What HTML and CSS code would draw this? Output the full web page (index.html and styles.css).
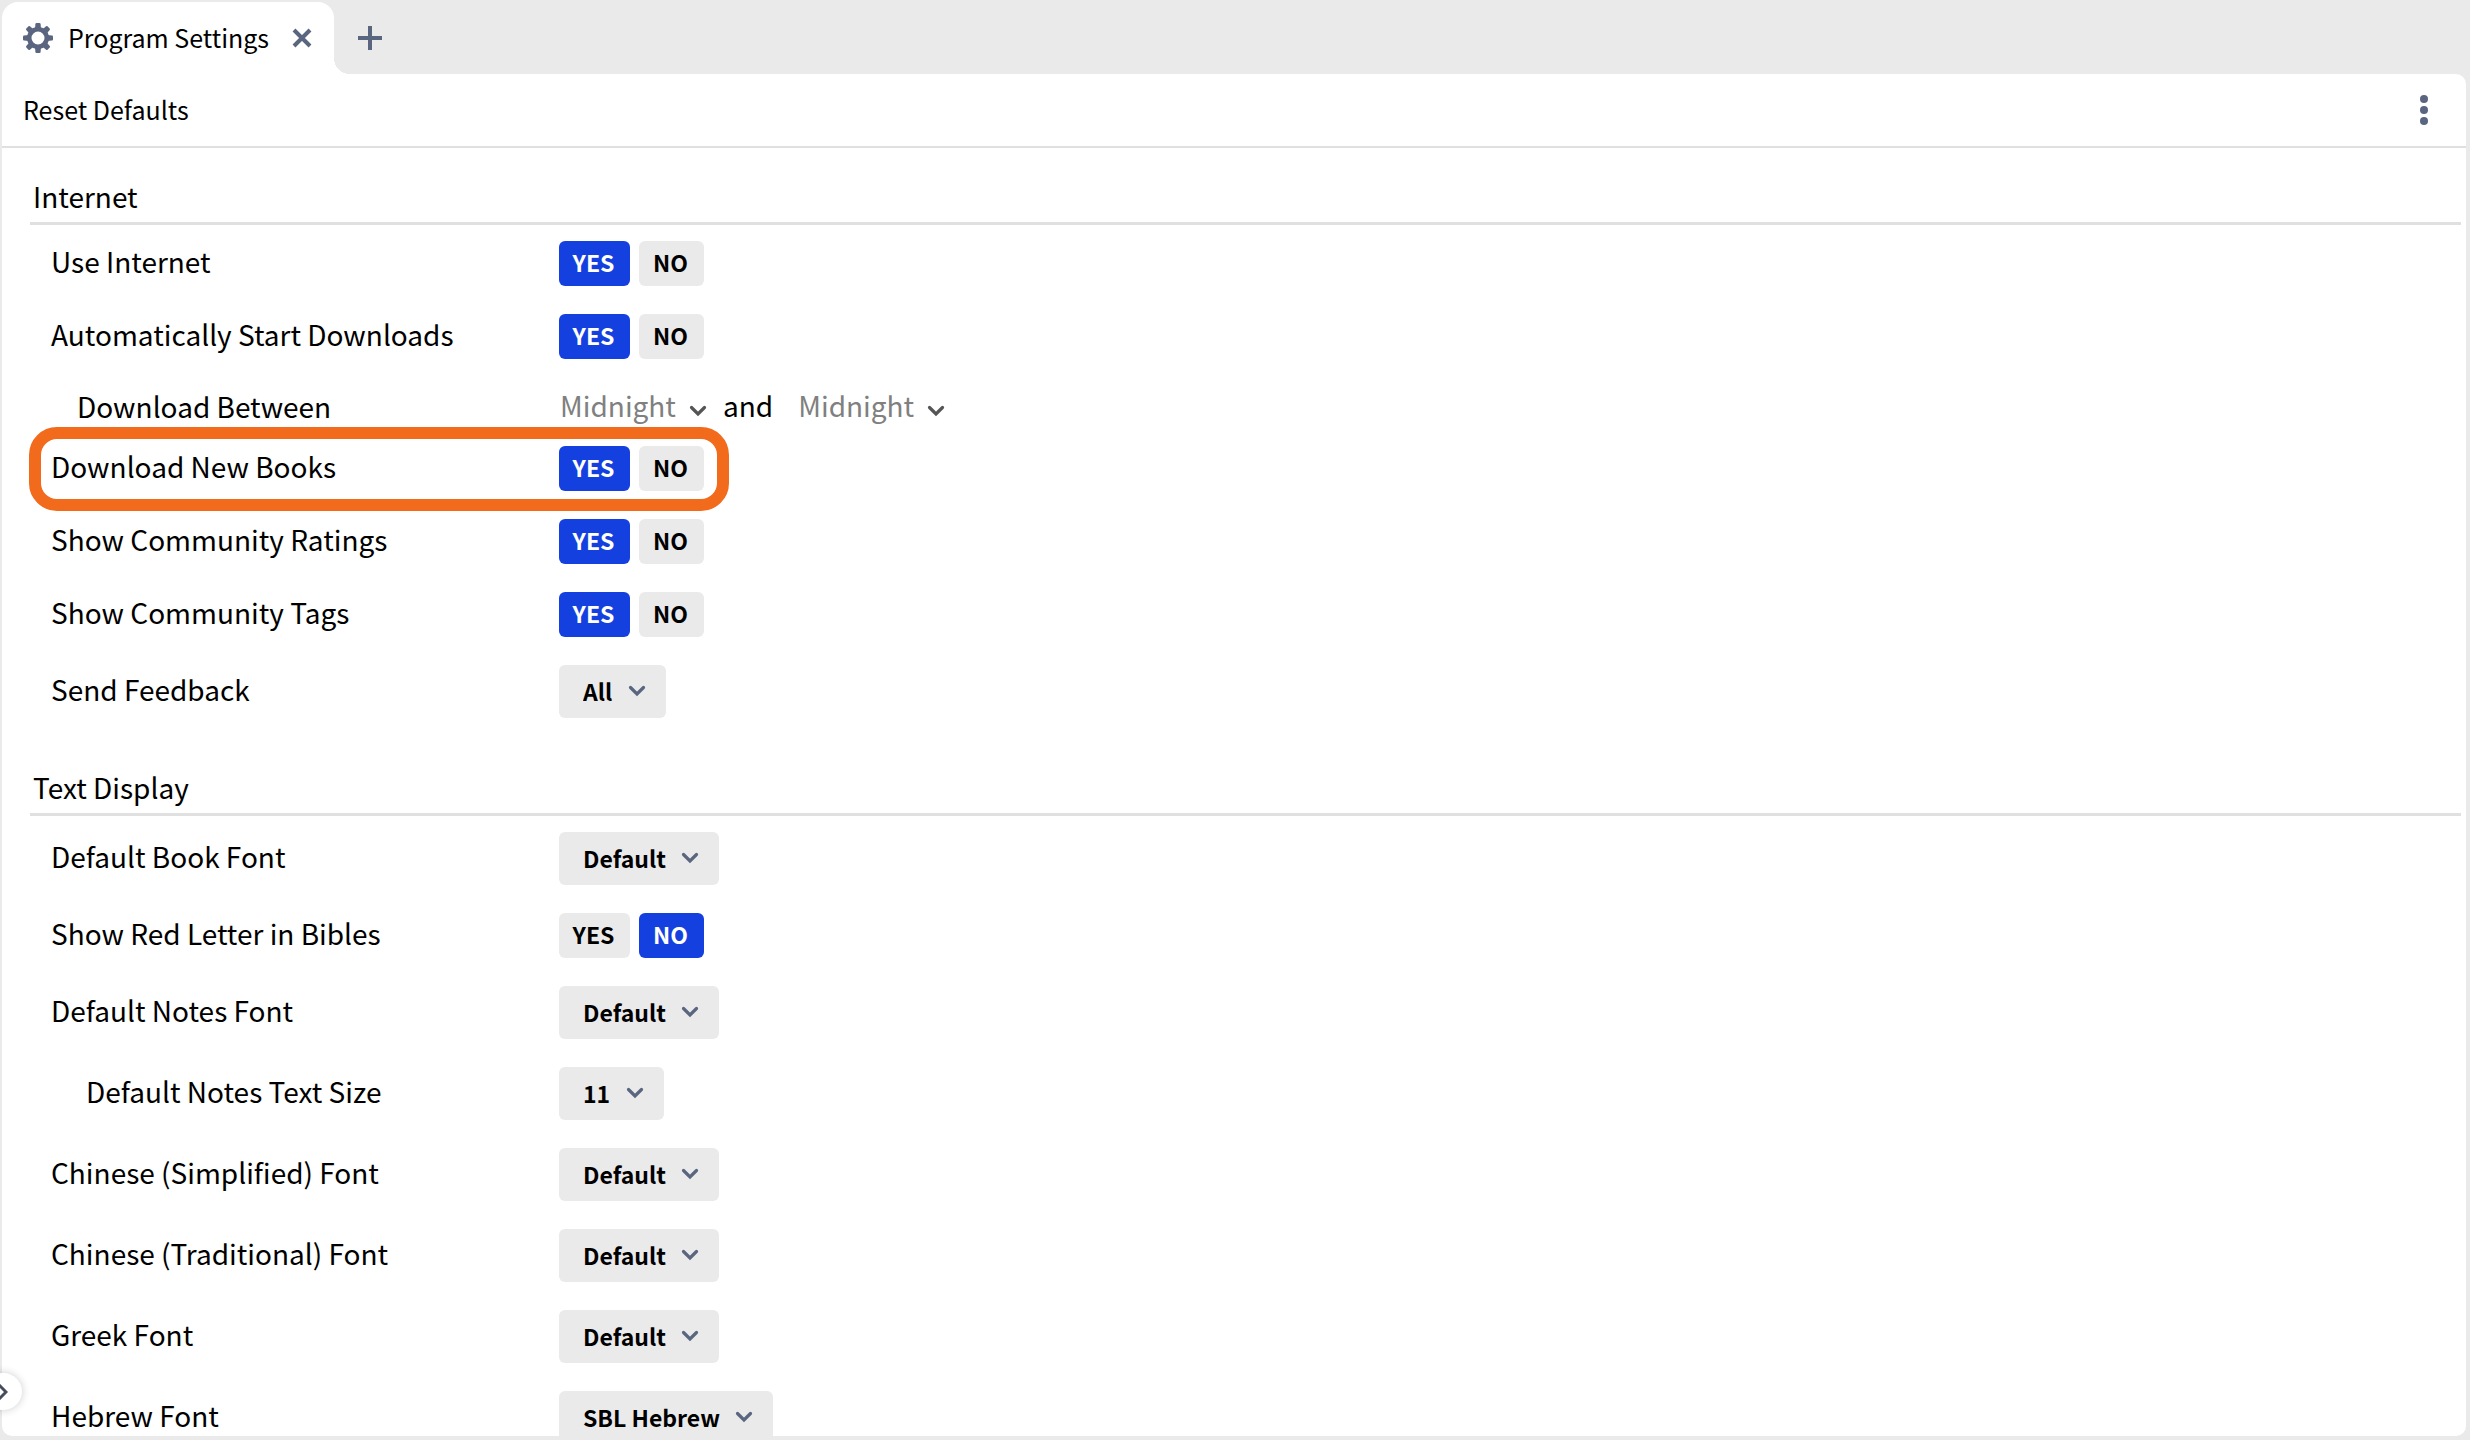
FILE: index.html
```html
<!DOCTYPE html>
<html lang="en">
<head>
<meta charset="utf-8">
<title>Program Settings</title>
<link rel="stylesheet" href="styles.css">
</head>
<body>
<svg class="defs" aria-hidden="true">
  <symbol id="chevron" viewBox="0 0 18 12"><path d="M2.5 2.5 9 9l6.500-6.500" fill="none" stroke="currentColor" stroke-width="3.200" stroke-linecap="round"/></symbol>
</svg>
<div class="app">
  <header class="tabs">
    <div class="tab">
      <svg class="gear" viewBox="0 0 30 30" aria-hidden="true">
        <g fill="currentColor">
          <path fill-rule="evenodd" d="M15 4a11 11 0 1 0 0 22a11 11 0 1 0 0-22zm0 4.500a6.500 6.500 0 1 1 0 13a6.500 6.500 0 1 1 0-13z"/>
          <path id="tooth" d="M12 6 12.400 1Q12.500 0 13.500 0h3Q17.500 0 17.600 1L18 6z"/>
          <use href="#tooth" transform="rotate(45 15 15)"/>
          <use href="#tooth" transform="rotate(90 15 15)"/>
          <use href="#tooth" transform="rotate(135 15 15)"/>
          <use href="#tooth" transform="rotate(180 15 15)"/>
          <use href="#tooth" transform="rotate(225 15 15)"/>
          <use href="#tooth" transform="rotate(270 15 15)"/>
          <use href="#tooth" transform="rotate(315 15 15)"/>
        </g>
      </svg>
      <span class="tab-title">Program Settings</span>
      <button class="icon-button" type="button" aria-label="Close tab">
        <svg class="close" viewBox="0 0 20 20"><path d="m2 2 16 16M18 2 2 18" stroke="currentColor" stroke-width="4"/></svg>
      </button>
    </div>
    <button class="icon-button add" type="button" aria-label="New tab">
      <svg class="plus" viewBox="0 0 24 24"><path d="M12 0v24M0 12h24" stroke="currentColor" stroke-width="4"/></svg>
    </button>
  </header>

  <main class="panel">
    <div class="toolbar">
      <button class="reset" type="button">Reset Defaults</button>
      <button class="icon-button" type="button" aria-label="More">
        <svg class="dots" viewBox="0 0 8 30"><g fill="currentColor"><circle cx="4" cy="4" r="4"/><circle cx="4" cy="15" r="4"/><circle cx="4" cy="26" r="4"/></g></svg>
      </button>
    </div>

    <div class="content">
      <section class="section">
        <h2 class="heading">Internet</h2>
        <div class="rows">
          <div class="row" role="group" aria-labelledby="l1">
            <span class="label" id="l1">Use Internet</span>
            <div class="toggle"><button class="choice on" type="button" aria-pressed="true">YES</button><button class="choice no" type="button" aria-pressed="false">NO</button></div>
          </div>
          <div class="row" role="group" aria-labelledby="l2">
            <span class="label" id="l2">Automatically Start Downloads</span>
            <div class="toggle"><button class="choice on" type="button" aria-pressed="true">YES</button><button class="choice no" type="button" aria-pressed="false">NO</button></div>
          </div>
          <div class="row">
            <label class="label between" for="from">Download Between</label>
            <div class="times">
              <span class="time"><select id="from" disabled><option>Midnight</option></select><svg class="chevron"><use href="#chevron"/></svg></span>
              <label class="and" for="to">and</label>
              <span class="time"><select id="to" disabled><option>Midnight</option></select><svg class="chevron"><use href="#chevron"/></svg></span>
            </div>
          </div>
          <div class="row highlighted" role="group" aria-labelledby="l3">
            <span class="label" id="l3">Download New Books</span>
            <div class="toggle"><button class="choice on" type="button" aria-pressed="true">YES</button><button class="choice no" type="button" aria-pressed="false">NO</button></div>
          </div>
          <div class="row" role="group" aria-labelledby="l4">
            <span class="label" id="l4">Show Community Ratings</span>
            <div class="toggle"><button class="choice on" type="button" aria-pressed="true">YES</button><button class="choice no" type="button" aria-pressed="false">NO</button></div>
          </div>
          <div class="row" role="group" aria-labelledby="l5">
            <span class="label" id="l5">Show Community Tags</span>
            <div class="toggle"><button class="choice on" type="button" aria-pressed="true">YES</button><button class="choice no" type="button" aria-pressed="false">NO</button></div>
          </div>
          <div class="row">
            <label class="label" for="feedback">Send Feedback</label>
            <span class="dropdown"><select id="feedback"><option>All</option></select><svg class="chevron"><use href="#chevron"/></svg></span>
          </div>
        </div>
      </section>

      <section class="section">
        <h2 class="heading">Text Display</h2>
        <div class="rows">
          <div class="row">
            <label class="label" for="book">Default Book Font</label>
            <span class="dropdown"><select id="book"><option>Default</option></select><svg class="chevron"><use href="#chevron"/></svg></span>
          </div>
          <div class="row" role="group" aria-labelledby="l6">
            <span class="label" id="l6">Show Red Letter in Bibles</span>
            <div class="toggle"><button class="choice" type="button" aria-pressed="false">YES</button><button class="choice no on" type="button" aria-pressed="true">NO</button></div>
          </div>
          <div class="row">
            <label class="label" for="notes">Default Notes Font</label>
            <span class="dropdown"><select id="notes"><option>Default</option></select><svg class="chevron"><use href="#chevron"/></svg></span>
          </div>
          <div class="row">
            <label class="label nested" for="size">Default Notes Text Size</label>
            <span class="dropdown"><select id="size"><option>11</option></select><svg class="chevron"><use href="#chevron"/></svg></span>
          </div>
          <div class="row">
            <label class="label" for="simplified">Chinese (Simplified) Font</label>
            <span class="dropdown"><select id="simplified"><option>Default</option></select><svg class="chevron"><use href="#chevron"/></svg></span>
          </div>
          <div class="row">
            <label class="label" for="traditional">Chinese (Traditional) Font</label>
            <span class="dropdown"><select id="traditional"><option>Default</option></select><svg class="chevron"><use href="#chevron"/></svg></span>
          </div>
          <div class="row">
            <label class="label" for="greek">Greek Font</label>
            <span class="dropdown"><select id="greek"><option>Default</option></select><svg class="chevron"><use href="#chevron"/></svg></span>
          </div>
          <div class="row">
            <label class="label" for="hebrew">Hebrew Font</label>
            <span class="dropdown"><select id="hebrew"><option>SBL Hebrew</option></select><svg class="chevron"><use href="#chevron"/></svg></span>
          </div>
        </div>
      </section>
    </div>
  </main>
  <button class="expand" type="button" aria-label="Expand sidebar">
    <svg class="expand-icon" viewBox="0 0 10 16"><path d="m1 1 7 7-7 7" fill="none" stroke="currentColor" stroke-width="3"/></svg>
  </button>
</div>
</body>
</html>
```
FILE: styles.css
```css
*,
*::before,
*::after {
  box-sizing: border-box;
}

body {
  margin: 0;
  background: #eaeaea;
  color: #000;
  font-family: "Noto Sans CJK SC", "Noto Sans", sans-serif;
  font-size: 28px;
  line-height: 40px;
}

button,
select {
  margin: 0;
  padding: 0;
  border: 0;
  background: none;
  color: inherit;
  font: inherit;
}

select {
  appearance: none;
  opacity: 1;
}

svg {
  display: block;
  flex: none;
}

.defs {
  display: none;
}

.app {
  position: relative;
  display: flex;
  flex-direction: column;
  height: 100vh;
  padding: 2px 4px 4px 2px;
  overflow: hidden;
}

/* Tab strip */
.tabs {
  display: flex;
  flex: none;
  height: 72px;
  color: #5a6580;
}

.tab {
  position: relative;
  display: flex;
  align-items: center;
  padding: 0 22px 0 21px;
  border-radius: 16px 16px 0 0;
  background: #fff;
}

.tab::after {
  content: "";
  position: absolute;
  left: 100%;
  bottom: 0;
  width: 16px;
  height: 16px;
  background: radial-gradient(circle at 100% 0, transparent 16px, #fff 16px);
}

.tab-title {
  margin: 0 23px 0 15px;
  padding-bottom: 3px;
  color: #000;
  font-size: 25px;
}

.gear {
  width: 30px;
  height: 30px;
}

.close {
  width: 20px;
  height: 20px;
}

.add {
  margin-left: 24px;
}

.plus {
  width: 24px;
  height: 24px;
}

/* Panel */
.panel {
  display: flex;
  flex: 1;
  flex-direction: column;
  min-height: 0;
  overflow: hidden;
  border-radius: 0 10px 10px 10px;
  background: #fff;
}

.toolbar {
  display: flex;
  flex: none;
  align-items: center;
  justify-content: space-between;
  height: 74px;
  padding: 0 38px 0 21px;
  border-bottom: 2px solid #e0e0e0;
  color: #5a6580;
}

.reset {
  padding-bottom: 3px;
  color: #000;
  font-size: 25px;
}

.dots {
  width: 8px;
  height: 30px;
}

.content {
  flex: 1;
  min-height: 0;
  padding: 30px 5px 0 28px;
  overflow: hidden;
}

.section {
  margin-bottom: 51px;
}

.heading {
  margin: 0 0 16px;
  padding: 0 3px 8px;
  border-bottom: 3px solid #e0e0e0;
  font-size: 28px;
  font-weight: 400;
  line-height: 36px;
}

.rows {
  display: flex;
  flex-direction: column;
  gap: 28px;
  padding-left: 21px;
}

.row {
  position: relative;
  display: grid;
  grid-template-columns: 508px 1fr;
  align-items: center;
}

.label {
  margin: -8px 0;
  padding-bottom: 6px;
}

.label.between {
  padding: 6px 0 0 26px;
}

.label.nested {
  padding-left: 35px;
}

.highlighted::before {
  content: "";
  position: absolute;
  inset: -19px auto -20px -22px;
  width: 700px;
  border: 12px solid #f26a1b;
  border-radius: 28px;
  pointer-events: none;
}

.toggle {
  display: flex;
  gap: 9px;
}

.choice {
  width: 71px;
  height: 45px;
  padding: 0 2px 3px 0;
  border-radius: 6px;
  background: #eaeaea;
  font-size: 23px;
  font-weight: 700;
  line-height: 42px;
}

.choice.no {
  width: 65px;
}

.choice.on {
  background: #1540e0;
  color: #fff;
}

.dropdown {
  position: relative;
  justify-self: start;
  border-radius: 6px;
  background: #eaeaea;
  color: #5a6580;
}

.dropdown select {
  display: block;
  height: 53px;
  padding: 0 53px 2px 24px;
  color: #000;
  font-size: 23px;
  font-weight: 700;
}

.chevron {
  width: 18px;
  height: 12px;
  pointer-events: none;
}

.dropdown .chevron {
  position: absolute;
  top: 20px;
  right: 20px;
}

.times {
  display: flex;
  align-items: center;
  height: 31px;
}

.time {
  display: flex;
  align-items: center;
  gap: 13px;
  color: #555;
}

.time select {
  height: 48px;
  padding: 4px 0 0 1px;
  color: #808080;
}

.time .chevron {
  margin-top: 16px;
}

.and {
  margin: 0 24px 0 16px;
  padding-top: 5px;
}

/* Sidebar handle */
.expand {
  position: absolute;
  bottom: 30px;
  left: -16px;
  display: flex;
  align-items: center;
  justify-content: flex-end;
  width: 38px;
  height: 37px;
  padding-right: 14px;
  border-radius: 19px;
  background: #fff;
  box-shadow: 0 0 8px rgba(0, 0, 0, 0.2);
  color: #454c5c;
}

.expand-icon {
  width: 10px;
  height: 16px;
}
```
